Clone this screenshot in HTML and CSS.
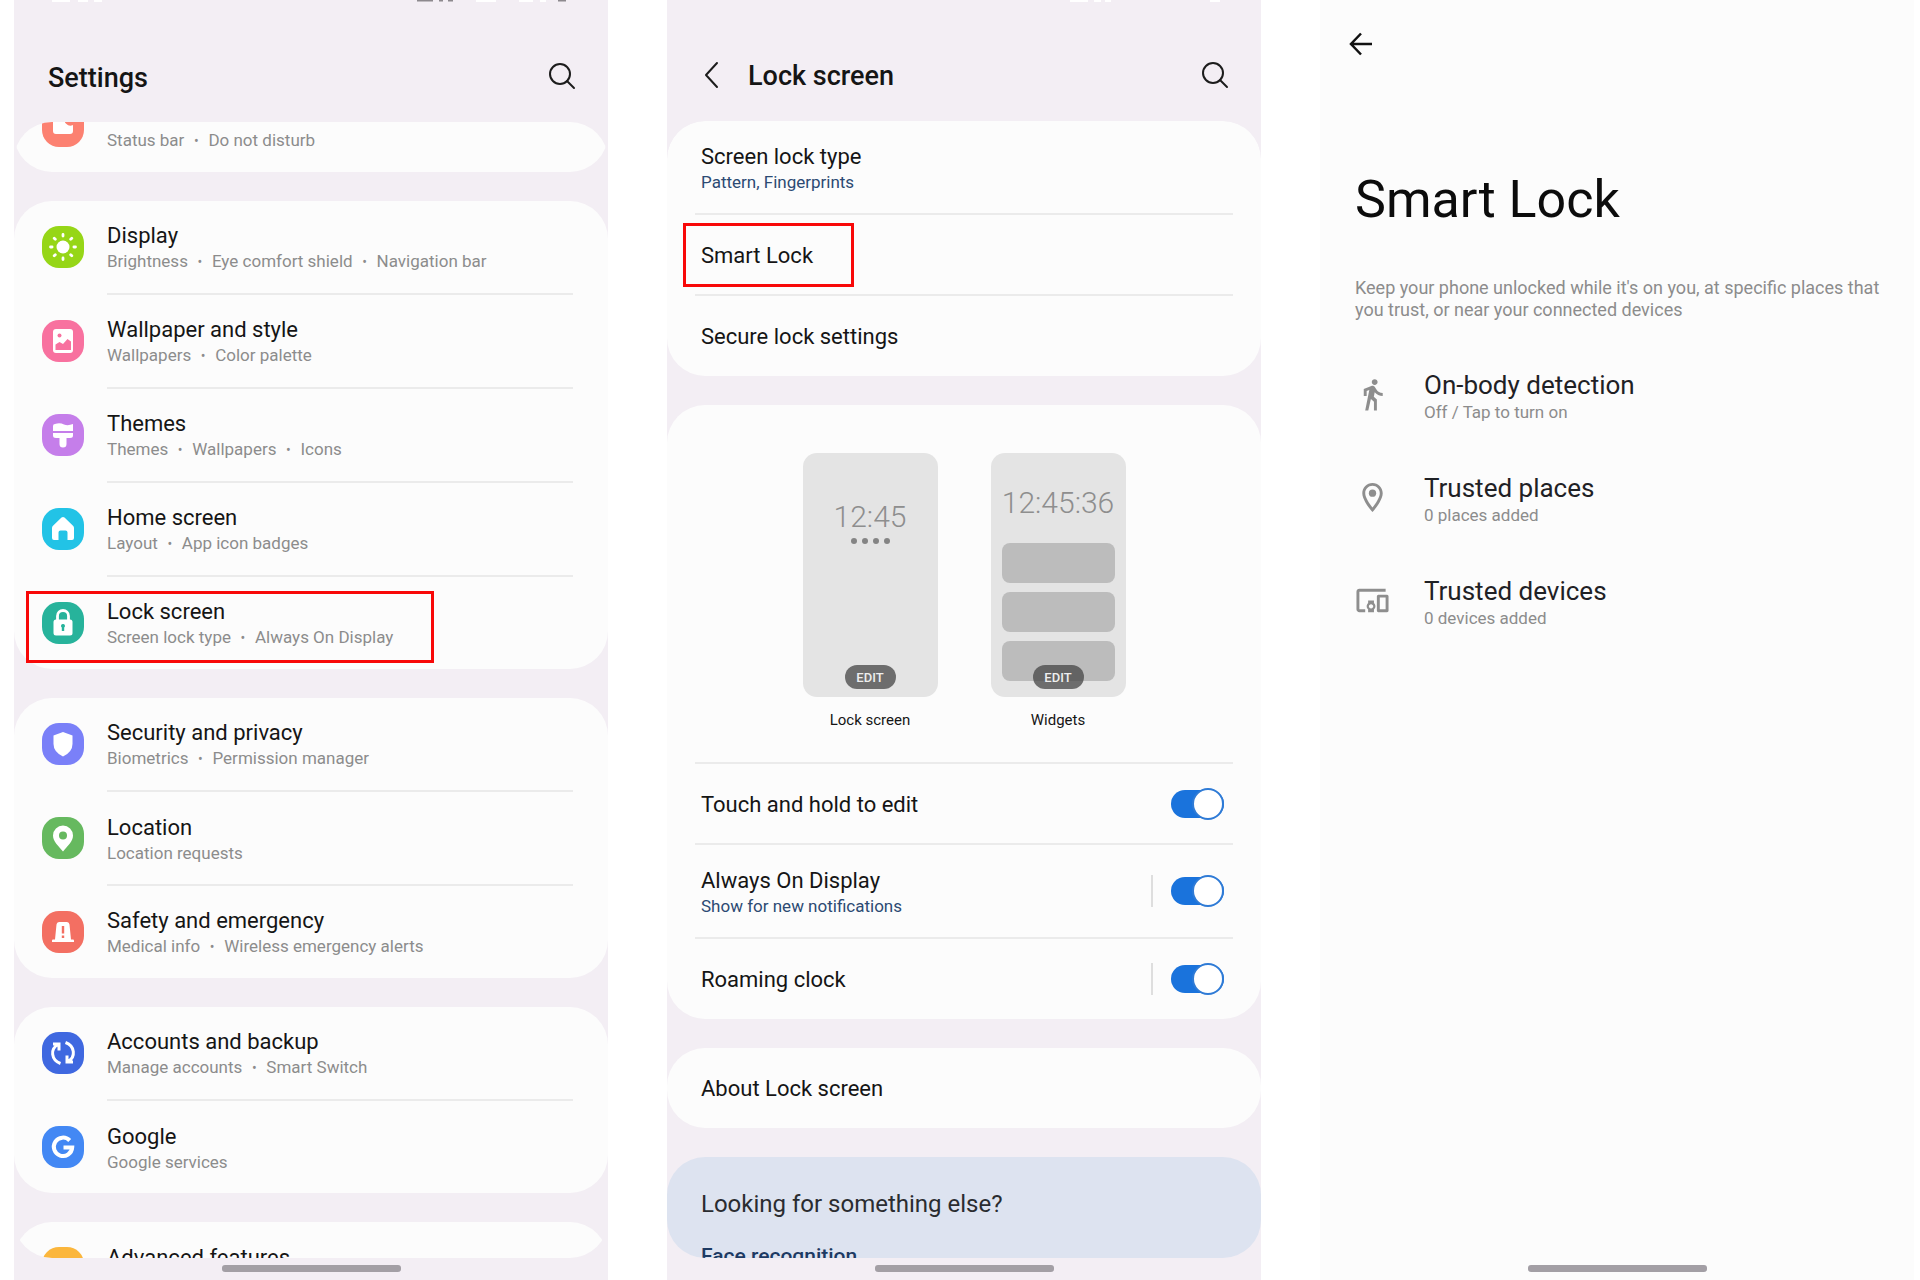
FILE: index.html
```html
<!DOCTYPE html>
<html lang="en">
<head>
    <meta charset="UTF-8">
    <title>Smart Lock</title>
    <link rel="stylesheet" href="styles.css">
</head>
<body>
    <div class="container">
        <!-- Settings -->
        <div class="phone">
            <svg class="status" viewBox="0 0 594 4">
                <path d="M38 0h18M64 0h10M80 0h8" stroke="#fff" stroke-width="4"/>
                <path d="M403 0h16M425 0h4M434 0h5M544 0h8" stroke="#8d898e" stroke-width="3"/>
                <path d="M462 0h20M505 0h14M526 0h6" stroke="#fff" stroke-width="4"/>
            </svg>
            <div class="header">
                <h1>Settings</h1>
                <button class="search" aria-label="Search">
                    <svg viewBox="0 0 28 28"><circle cx="12" cy="12" r="10"/><path d="M19 19l7 7"/></svg>
                </button>
            </div>
            <div class="list scrolled">
                <div class="card">
                    <a class="row faded" href="#">
                        <svg class="icon" viewBox="0 0 42 42"><rect width="42" height="42" rx="17" fill="#fc8171"/><path d="M11 12h12a6 6 0 0 0 8 8v6a3 3 0 0 1-3 3H14a3 3 0 0 1-3-3z" fill="#fff"/></svg>
                        <div class="text"><b>Notifications</b><span>Status bar<i>•</i>Do not disturb</span></div>
                    </a>
                </div>
                <div class="card">
                    <a class="row" href="#">
                        <svg class="icon" viewBox="0 0 42 42"><rect width="42" height="42" rx="17" fill="#96d617"/><circle cx="21" cy="21" r="6.5" fill="#fff"/><g stroke="#fff" stroke-width="2.8" stroke-linecap="round"><path d="M21 8.500v1.600M21 31.900v1.600M8.500 21h1.600M31.900 21h1.600M12.200 12.200l1.100 1.100M28.700 28.700l1.100 1.100M12.200 29.800l1.100-1.100M28.700 13.300l1.100-1.100"/></g></svg>
                        <div class="text"><b>Display</b><span>Brightness<i>•</i>Eye comfort shield<i>•</i>Navigation bar</span></div>
                    </a>
                    <a class="row" href="#">
                        <svg class="icon" viewBox="0 0 42 42"><rect width="42" height="42" rx="17" fill="#f8719f"/><rect x="11" y="9" width="20" height="24" rx="3" fill="#fff"/><circle cx="17.500" cy="15.500" r="2" fill="#f8719f"/><path d="M13.500 30v-5.500l4-2.500 3.500 2 4.500-5 3.500 2.500V30z" fill="#f8719f"/></svg>
                        <div class="text"><b>Wallpaper and style</b><span>Wallpapers<i>•</i>Color palette</span></div>
                    </a>
                    <a class="row" href="#">
                        <svg class="icon" viewBox="0 0 42 42"><rect width="42" height="42" rx="17" fill="#c57eea"/><path d="M11 12q0-2 2-2 5-1.500 9 .5 4 1.500 9-.5v7H11zM11 19h20v2.500q0 2.500-3 2.500h-3.500v6q0 3.500-3.500 3.500T17.500 30v-6H14q-3 0-3-2.500z" fill="#fff"/></svg>
                        <div class="text"><b>Themes</b><span>Themes<i>•</i>Wallpapers<i>•</i>Icons</span></div>
                    </a>
                    <a class="row" href="#">
                        <svg class="icon" viewBox="0 0 42 42"><rect width="42" height="42" rx="17" fill="#22c3e6"/><path d="M19.500 9.500q1.500-1.200 3 0l8.500 8.300q1 1 1 2.200v10q0 2-2 2h-4.500v-7.500q0-2-2-2h-5q-2 0-2 2V32H12q-2 0-2-2V20q0-1.200 1-2.200z" fill="#fff"/></svg>
                        <div class="text"><b>Home screen</b><span>Layout<i>•</i>App icon badges</span></div>
                    </a>
                    <a class="row" href="#">
                        <svg class="icon" viewBox="0 0 42 42"><rect width="42" height="42" rx="17" fill="#27b39b"/><path d="M15.500 19v-5a5.500 5.500 0 0 1 11 0v5" fill="none" stroke="#fff" stroke-width="2.800"/><rect x="11.500" y="17.500" width="19" height="16" rx="2.500" fill="#fff"/><path d="M21 22a2 2 0 0 1 1.200 3.600V29h-2.400v-3.400A2 2 0 0 1 21 22z" fill="#27b39b"/></svg>
                        <div class="text"><b>Lock screen</b><span>Screen lock type<i>•</i>Always On Display</span></div>
                        <div class="mark mark-lock"></div>
                    </a>
                </div>
                <div class="card">
                    <a class="row" href="#">
                        <svg class="icon" viewBox="0 0 42 42"><rect width="42" height="42" rx="17" fill="#7a80f8"/><path d="M21 9l9.500 3.500V21q0 8-9.500 12.500Q11.500 29 11.500 21v-8.500z" fill="#fff"/></svg>
                        <div class="text"><b>Security and privacy</b><span>Biometrics<i>•</i>Permission manager</span></div>
                    </a>
                    <a class="row" href="#">
                        <svg class="icon" viewBox="0 0 42 42"><rect width="42" height="42" rx="17" fill="#66b95f"/><path d="M21 8.500a10 10 0 0 1 10 10c0 6-5.500 10.500-10 16-4.500-5.500-10-10-10-16a10 10 0 0 1 10-10z" fill="#fff"/><circle cx="21" cy="18.500" r="4" fill="#66b95f"/></svg>
                        <div class="text"><b>Location</b><span>Location requests</span></div>
                    </a>
                    <a class="row" href="#">
                        <svg class="icon" viewBox="0 0 42 42"><rect width="42" height="42" rx="17" fill="#f36f62"/><path d="M13 28.500l1.500-15q.3-2.500 2.500-2.500h8q2.200 0 2.500 2.500l1.500 15h2q1 0 1 1.200V31H10v-1.300q0-1.200 1-1.200z" fill="#fff"/><path d="M21 15v7.500M21 24.500v2.500" stroke="#f36f62" stroke-width="2.400"/></svg>
                        <div class="text"><b>Safety and emergency</b><span>Medical info<i>•</i>Wireless emergency alerts</span></div>
                    </a>
                </div>
                <div class="card">
                    <a class="row" href="#">
                        <svg class="icon" viewBox="0 0 42 42"><rect width="42" height="42" rx="17" fill="#3f68e0"/><g fill="none" stroke="#fff" stroke-width="3"><path d="M18.500 31.500C9 28 8 17 16 12.500M11 12h6v6.500M23.500 10.500C33 14 34 25 26 29.500M31 30h-6v-6.500"/></g></svg>
                        <div class="text"><b>Accounts and backup</b><span>Manage accounts<i>•</i>Smart Switch</span></div>
                    </a>
                    <a class="row" href="#">
                        <svg class="icon" viewBox="0 0 42 42"><rect width="42" height="42" rx="17" fill="#4388f4"/><path d="M27.700 14.500a9.200 9.200 0 1 0 2.500 7H21.500" fill="none" stroke="#fff" stroke-width="4"/></svg>
                        <div class="text"><b>Google</b><span>Google services</span></div>
                    </a>
                </div>
                <div class="card">
                    <a class="row" href="#">
                        <svg class="icon" viewBox="0 0 42 42"><rect width="42" height="42" rx="17" fill="#fbb63c"/></svg>
                        <div class="text"><b>Advanced features</b><span>&nbsp;</span></div>
                    </a>
                </div>
            </div>
            <div class="nav"><span></span></div>
        </div>

        <!-- Lock screen -->
        <div class="phone">
            <svg class="status" viewBox="0 0 594 4">
                <path d="M403 0h18M427 0h7M438 0h6M543 0h10" stroke="#fff" stroke-width="4"/>
            </svg>
            <div class="header header-sub">
                <button class="back" aria-label="Back">
                    <svg viewBox="0 0 16 28"><path d="M14 2L3 14l11 12"/></svg>
                </button>
                <h1>Lock screen</h1>
                <button class="search" aria-label="Search">
                    <svg viewBox="0 0 28 28"><circle cx="12" cy="12" r="10"/><path d="M19 19l7 7"/></svg>
                </button>
            </div>
            <div class="list">
                <div class="card">
                    <a class="item double" href="#">
                        <div class="text"><b>Screen lock type</b><span>Pattern, Fingerprints</span></div>
                    </a>
                    <a class="item" href="#">
                        <div class="text"><b>Smart Lock</b></div>
                        <div class="mark mark-smart"></div>
                    </a>
                    <a class="item" href="#">
                        <div class="text"><b>Secure lock settings</b></div>
                    </a>
                </div>
                <div class="card">
                    <div class="previews">
                        <div class="preview">
                            <div class="screen">
                                <p class="clock">12:45</p>
                                <div class="dots"><span></span><span></span><span></span><span></span></div>
                                <button class="edit">EDIT</button>
                            </div>
                            <p class="caption">Lock screen</p>
                        </div>
                        <div class="preview">
                            <div class="screen screen-widgets">
                                <p class="clock">12:45:36</p>
                                <div class="widget"></div>
                                <div class="widget"></div>
                                <div class="widget"></div>
                                <button class="edit">EDIT</button>
                            </div>
                            <p class="caption">Widgets</p>
                        </div>
                    </div>
                    <div class="item">
                        <label class="text" for="touch"><b>Touch and hold to edit</b></label>
                        <input class="switch" type="checkbox" id="touch" checked>
                    </div>
                    <div class="item double">
                        <label class="text" for="aod"><b>Always On Display</b><span>Show for new notifications</span></label>
                        <div class="line"></div>
                        <input class="switch" type="checkbox" id="aod" checked>
                    </div>
                    <div class="item">
                        <label class="text" for="roaming"><b>Roaming clock</b></label>
                        <div class="line"></div>
                        <input class="switch" type="checkbox" id="roaming" checked>
                    </div>
                </div>
                <div class="card">
                    <a class="item" href="#">
                        <div class="text"><b>About Lock screen</b></div>
                    </a>
                </div>
                <div class="card more">
                    <h2>Looking for something else?</h2>
                    <a href="#">Face recognition</a>
                </div>
            </div>
            <div class="nav"><span></span></div>
        </div>

        <!-- Smart Lock -->
        <div class="phone smart">
            <button class="arrow" aria-label="Back">
                <svg viewBox="0 0 24 24"><path d="M23 12H2M12 1.500L2 12l10 10.500"/></svg>
            </button>
            <h1>Smart Lock</h1>
            <p class="desc">Keep your phone unlocked while it's on you, at specific places that you trust, or near your connected devices</p>
            <div class="options">
                <a class="option" href="#">
                    <svg viewBox="0 0 24 24"><path d="M13.500 5.500c1.100 0 2-.9 2-2s-.9-2-2-2-2 .9-2 2 .9 2 2 2zM9.800 8.900L7 23h2.100l1.800-8 2.100 2v6h2v-7.500l-2.100-2 .6-3C14.800 12 16.800 13 19 13v-2c-1.900 0-3.500-1-4.300-2.400l-1-1.600c-.4-.6-1-1-1.700-1-.3 0-.5.100-.8.100L6 8.300V13h2V9.600l1.800-.7"/></svg>
                    <div class="text"><b>On-body detection</b><span>Off / Tap to turn on</span></div>
                </a>
                <a class="option" href="#">
                    <svg viewBox="0 0 24 24"><path d="M12 2C8.130 2 5 5.130 5 9c0 5.250 7 13 7 13s7-7.750 7-13c0-3.870-3.130-7-7-7zM7 9c0-2.760 2.240-5 5-5s5 2.240 5 5c0 2.880-2.880 7.190-5 9.880C9.920 16.210 7 11.850 7 9z"/><circle cx="12" cy="9" r="2.500"/></svg>
                    <div class="text"><b>Trusted places</b><span>0 places added</span></div>
                </a>
                <a class="option" href="#">
                    <svg viewBox="0 0 24 24"><path d="M3 6h18V4H3c-1.100 0-2 .9-2 2v12c0 1.100.9 2 2 2h4v-2H3V6zm10 6H9v1.780c-.61.55-1 1.330-1 2.220s.39 1.670 1 2.220V20h4v-1.780c.61-.55 1-1.340 1-2.220s-.39-1.670-1-2.220V12zm-2 5.500c-.83 0-1.500-.67-1.500-1.500s.67-1.500 1.500-1.500 1.500.67 1.500 1.500-.67 1.500-1.500 1.500zM22 8h-6c-.5 0-1 .5-1 1v10c0 .5.500 1 1 1h6c.5 0 1-.5 1-1V9c0-.5-.5-1-1-1zm-1 10h-4v-8h4v8z"/></svg>
                    <div class="text"><b>Trusted devices</b><span>0 devices added</span></div>
                </a>
            </div>
            <div class="nav"><span></span></div>
        </div>
    </div>
</body>
</html>
```
FILE: styles.css
```css
*{
    margin: 0;
    padding: 0;
    box-sizing: border-box;
}
body{
    background-color: #fff;
    font-family: Roboto, "Liberation Sans", sans-serif;
    color: #151515;
}
a{
    color: inherit;
    text-decoration: none;
}
button{
    border: none;
    background: none;
    font-family: inherit;
}
.container{
    display: grid;
    grid-template-columns: repeat(3, 1fr);
    gap: 59px;
    height: 100vh;
    padding: 0 6px 0 14px;
}
.phone{
    display: flex;
    flex-direction: column;
    min-height: 0;
    background-color: #f3eef4;
    position: relative;
}
.status{
    position: absolute;
    top: 0;
    left: 0;
    width: 100%;
}

/* header */
.header{
    display: flex;
    align-items: center;
    height: 122px;
    padding: 30px 32px 0 34px;
}
.header-sub{
    height: 121px;
    padding: 28px 32px 0 36px;
}
.header h1{
    flex: 1;
    padding-top: 3px;
    font-size: 27px;
    line-height: 32px;
    font-weight: 500;
}
.header svg{
    display: block;
    fill: none;
    stroke: #1c1c1c;
    stroke-width: 2;
    stroke-linecap: round;
    stroke-linejoin: round;
}
.search svg{
    width: 28px;
    height: 28px;
}
.back{
    margin-right: 29px;
}
.back svg{
    width: 16px;
    height: 28px;
}

/* cards */
.list{
    flex: 1;
    min-height: 0;
    overflow: hidden;
    border-radius: 38px;
}
.scrolled .card:first-child{
    margin-top: -42px;
}
.card{
    background-color: #fcfcfc;
    border-radius: 38px;
    margin-bottom: 29px;
}
.row{
    display: flex;
    align-items: center;
    height: 94px;
    padding: 0 0 3px 28px;
    position: relative;
}
.row::after{
    content: "";
    position: absolute;
    left: 93px;
    right: 35px;
    bottom: 0;
    height: 2px;
    background-color: #ebebeb;
}
.row:last-child{
    height: 92px;
    padding-bottom: 1px;
}
.row:last-child::after{
    display: none;
}
.icon{
    width: 42px;
    height: 42px;
    margin-right: 23px;
}
.text{
    flex: 1;
    padding-top: 2px;
}
.text b{
    display: block;
    font-size: 22px;
    line-height: 28px;
    font-weight: 400;
}
.text span{
    display: block;
    font-size: 17px;
    line-height: 22px;
    color: #8c8c8c;
}
.text i{
    display: inline-block;
    width: 24px;
    font-size: 14px;
    font-style: normal;
    text-align: center;
}
.faded b{
    color: #f0f0f0;
}

/* red frames */
.mark{
    position: absolute;
    border: 3px solid #f80808;
}
.mark-lock{
    top: 14px;
    left: 12px;
    width: 408px;
    height: 72px;
}
.mark-smart{
    top: 8px;
    left: -12px;
    width: 171px;
    height: 64px;
}

/* lock screen */
.item{
    display: flex;
    align-items: center;
    height: 81px;
    margin: 0 28px;
    padding: 0 9px 0 6px;
    border-bottom: 2px solid #ebebeb;
    position: relative;
}
.item:last-child{
    height: 80px;
    border-bottom: none;
}
.double{
    height: 94px;
}
.item .text span{
    color: #2c4a73;
}
.line{
    width: 2px;
    height: 32px;
    margin-right: 18px;
    background-color: #dedede;
}
.switch{
    appearance: none;
    width: 53px;
    height: 28px;
    border-radius: 14px;
    background-color: #1a73dc;
    position: relative;
}
.switch::after{
    content: "";
    position: absolute;
    top: -2px;
    right: 0;
    width: 32px;
    height: 32px;
    border: 2px solid #2f7bd6;
    border-radius: 50%;
    background-color: #fff;
    box-sizing: border-box;
}
.previews{
    display: flex;
    justify-content: center;
    gap: 53px;
    height: 359px;
    margin: 0 28px;
    padding-top: 48px;
    border-bottom: 2px solid #ebebeb;
}
.preview{
    width: 135px;
}
.screen{
    height: 244px;
    padding: 46px 11px 0;
    border-radius: 14px;
    background-color: #e4e4e4;
    position: relative;
}
.screen-widgets{
    padding-top: 32px;
}
.clock{
    font-size: 30px;
    line-height: 36px;
    font-weight: 300;
    text-align: center;
    color: #8e8e8e;
}
.dots{
    display: flex;
    justify-content: center;
    gap: 5px;
    margin-top: 3px;
}
.dots span{
    width: 6px;
    height: 6px;
    border-radius: 50%;
    background-color: #848484;
}
.widget{
    height: 40px;
    margin-bottom: 9px;
    border-radius: 8px;
    background-color: #bcbcbc;
}
.clock + .widget{
    margin-top: 22px;
}
.edit{
    position: absolute;
    left: 42px;
    bottom: 8px;
    width: 51px;
    height: 24px;
    border-radius: 12px;
    background-color: rgba(70, 70, 70, 0.75);
    color: #eee;
    font-size: 13px;
    font-weight: 500;
}
.caption{
    margin-top: 12px;
    font-size: 15px;
    line-height: 22px;
    text-align: center;
}
.more{
    padding: 33px 34px 0;
    height: 160px;
    background-color: #dde3f0;
}
.more h2{
    margin-bottom: 24px;
    font-size: 24px;
    line-height: 28px;
    font-weight: 400;
    color: #2a2c30;
}
.more a{
    font-size: 21px;
    line-height: 28px;
    font-weight: 500;
    color: #1d3a63;
}

/* bottom bar */
.nav{
    height: 22px;
    padding-top: 7px;
}
.nav span{
    display: block;
    width: 179px;
    height: 7px;
    margin: 0 auto;
    border-radius: 3px;
    background-color: #a39fa5;
}

/* smart lock */
.smart{
    padding: 32px 26px 0 35px;
    background-color: #fcfcfc;
}
.arrow{
    width: 24px;
    height: 24px;
    margin-left: -6px;
}
.arrow svg{
    display: block;
    fill: none;
    stroke: #111;
    stroke-width: 2.5;
}
.smart h1{
    margin-top: 113px;
    font-size: 52px;
    line-height: 62px;
    font-weight: 400;
    color: #0c0c0c;
}
.desc{
    margin-top: 46px;
    font-size: 18px;
    line-height: 22px;
    color: #8c8c8c;
}
.options{
    flex: 1;
    margin-top: 22px;
}
.option{
    display: flex;
    align-items: center;
    height: 103px;
}
.option svg{
    width: 35px;
    height: 35px;
    margin-right: 34px;
    fill: #8e8e8e;
}
.option .text b{
    font-size: 26px;
    line-height: 32px;
    color: #1f2125;
}
.smart .nav{
    margin-left: -9px;
}
```
